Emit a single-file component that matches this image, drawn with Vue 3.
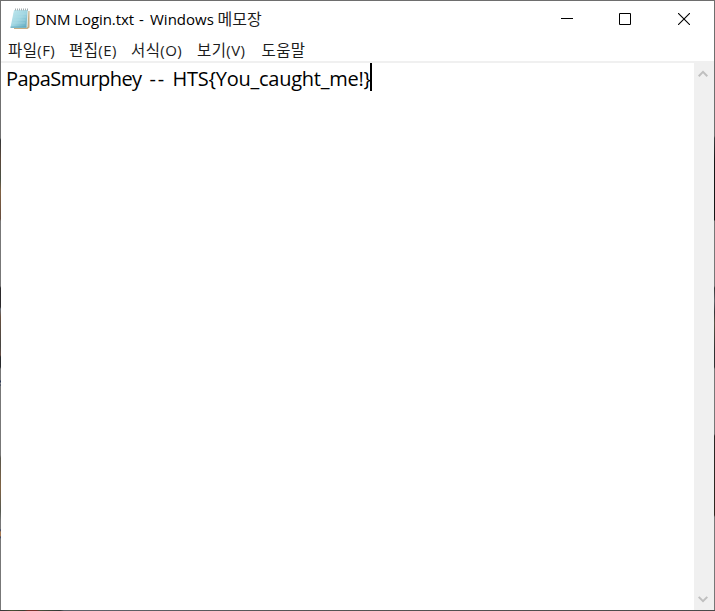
<script setup>
const menus = [
  { name: '파일', key: '(F)', id: 'file' },
  { name: '편집', key: '(E)', id: 'edit' },
  { name: '서식', key: '(O)', id: 'format' },
  { name: '보기', key: '(V)', id: 'view' },
  { name: '도움말', key: '', id: 'help' },
]
</script>

<template>
  <div class="frame">
    <div class="edge-left"></div>
    <div class="window">
      <header class="titlebar">
        <svg class="app-icon" width="20" height="22" viewBox="0 0 20 22">
          <defs>
            <linearGradient id="paper" x1="0" y1="0" x2="1" y2="1">
              <stop offset="0" stop-color="#c4e9ef" />
              <stop offset=".5" stop-color="#a0d6e2" />
              <stop offset="1" stop-color="#5ba6bd" />
            </linearGradient>
          </defs>
          <path d="M18 3h1.5v16.5L17.5 21H4v-1h13z" fill="#c5ad83" />
          <path d="M4 2H18l-1 17.5H.5z" fill="url(#paper)" />
          <path d="M18 3l-1 16" stroke="#e4ebe8" />
          <path d="M.5 19.2H16.5" stroke="#5aa5ba" />
          <path d="M3.5 6h13M3 9h13M2.5 12h13M2 15h13" stroke="#b6dfe7" stroke-width=".5" />
          <path d="M5 1.5h13" stroke="#a3adb0" stroke-width="2" stroke-dasharray="1 1" />
        </svg>
        <div class="title"><span class="title-file">DNM Login.txt</span><span class="title-dash">-</span><span class="title-app">Windows</span><span class="title-ko">메모장</span></div>
        <div class="controls">
          <svg width="12" height="12" viewBox="0 0 12 12"><path d="M0 5.5h12" stroke="#000" /></svg>
          <svg width="12" height="12" viewBox="0 0 12 12"><path d="M.5.5h11v11H.5z" fill="none" stroke="#000" /></svg>
          <svg width="12" height="12" viewBox="0 0 12 12"><path d="M0 0l12 12M12 0L0 12" stroke="#000" stroke-width="1.1" /></svg>
        </div>
      </header>
      <nav class="menu">
        <span v-for="m in menus" :key="m.id" :class="['item', m.id]">{{ m.name }}<span class="key">{{ m.key }}</span></span>
      </nav>
      <main class="editor">
        <div class="text">
          <span class="user">PapaSmurphey</span>
          <span class="dashes">--</span>
          <span class="flag">HTS{You_caught_me!}</span>
          <i class="caret"></i>
        </div>
        <div class="scrollbar">
          <svg width="10" height="8" viewBox="0 0 10 8"><path d="M.7 6.2L5 1.9l4.3 4.3" fill="none" stroke="#bfbfbf" stroke-width="2" /></svg>
          <svg width="10" height="8" viewBox="0 0 10 8"><path d="M.7 1.9L5 6.2l4.3-4.3" fill="none" stroke="#bfbfbf" stroke-width="2" /></svg>
        </div>
      </main>
    </div>
    <div class="edge-right"></div>
    <div class="edge-bottom"></div>
  </div>
</template>

<style>
body { background: #fff; overflow: hidden; }
</style>

<style scoped>
.frame {
  box-sizing: border-box;
  width: 715px;
  height: 611px;
  display: grid;
  grid-template-columns: 1px 713px 1px;
  grid-template-rows: 609px 1px;
  border-top: 1px solid #6e6e6e;
  background: #fff;
  color: #000;
  font-family: "Open Sans", "Noto Sans CJK KR", sans-serif;
}
.edge-left {
  background: linear-gradient(#707070 0 137px, #343638 139px, #5c4738 158px, #475044 178px, #806143 190px, #674c3d 218px, #777 220px 285px, #2b292b 287px 306px, #69707a 308px, #68503f 316px, #464542 345px, #674d43 354px, #282a2c 356px 366px, #777 368px 379px, #293656 380px 381px, #888 382px 383px, #293656 384px, #777 385px 454px, #59564c 457px, #806342 486px, #555951 510px, #777 520px 528px, #344063 529px, #a57952 531px 535px, #344063 536px, #777 538px);
}
.edge-right {
  background: linear-gradient(#6e6e6e 0 135px, #383b3d 137px, #151515 160px 219px, #777 220px 285px, #303234 287px, #62656a 300px, #343538 311px, #575345 322px, #303132 350px 366px, #777 368px 433px, #292624 435px, #30271f 514px, #777 516px);
}
.edge-bottom {
  grid-column: 1 / -1;
  background: linear-gradient(90deg, #3a3a3a 0 4px, #485032 12px, #373d33 24px, #7a302b 28px 36px, #474e38 40px, #313735 60px, #5d6168 64px 100px, #555 300px, #4a4a4a 715px);
}
.window {
  display: flex;
  flex-direction: column;
}
.titlebar {
  height: 36px;
  display: flex;
  align-items: center;
  padding-left: 9px;
}
.app-icon { flex: none; }
.title {
  display: flex;
  margin-left: 5px;
  font-size: 15px;
  line-height: 22px;
  white-space: nowrap;
}
.title-file { width: 104px; letter-spacing: -.08px; }
.title-dash { width: 11px; }
.title-app { width: 67.5px; letter-spacing: 0; }
.title-ko { color: #1c1c1c; font-size: 16px; }
.controls {
  display: flex;
  gap: 47px;
  margin-left: auto;
  padding-right: 24px;
}
.controls svg:first-child { margin-right: -1px; }
.menu {
  box-sizing: border-box;
  height: 26px;
  display: flex;
  padding: 1px 0 0 7px;
  border-bottom: 2px solid #f0f0f0;
  color: #1c1c1c;
  font-size: 15.5px;
  letter-spacing: .4px;
  line-height: 25px;
  white-space: nowrap;
}
.item { flex: none; }
.key { font-size: 15px; }
.file { width: 61px; }
.edit { width: 62px; }
.format { width: 66px; }
.view { width: 64.5px; }
.editor {
  flex: 1;
  display: flex;
}
.text {
  flex: 1;
  display: flex;
  padding-left: 5px;
  font-size: 20px;
  line-height: 32px;
  white-space: nowrap;
}
.user { width: 143.5px; letter-spacing: -.55px; }
.dashes { width: 23px; letter-spacing: 1.8px; }
.flag { width: 197.5px; letter-spacing: -.25px; }
.caret {
  width: 2px;
  height: 28px;
  background: #000;
}
.scrollbar {
  width: 20px;
  box-sizing: border-box;
  display: flex;
  flex-direction: column;
  justify-content: space-between;
  align-items: center;
  padding: 7px 2px 7px 0;
  background: #f0f0f0;
}
</style>
